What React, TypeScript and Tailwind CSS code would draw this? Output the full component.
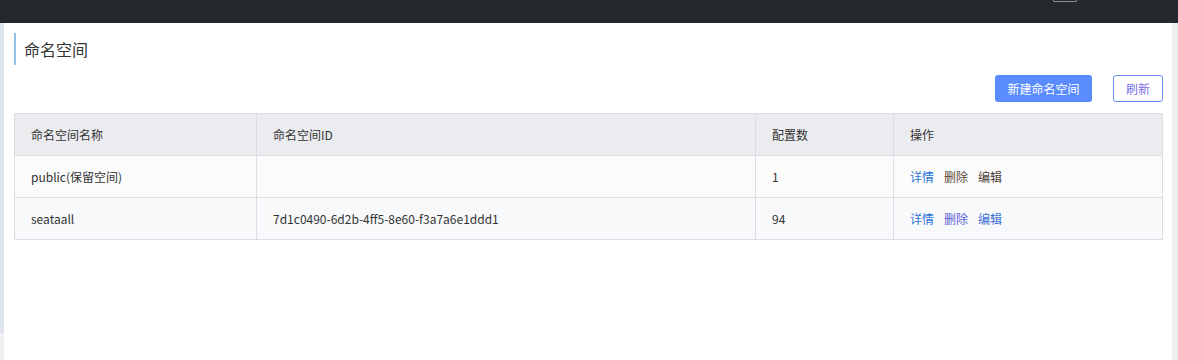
import React from "react";

interface Namespace {
  name: string;
  id: string;
  count: number;
  reserved?: boolean;
}

const rows: Namespace[] = [
  { name: "public(保留空间)", id: "", count: 1, reserved: true },
  { name: "seataall", id: "7d1c0490-6d2b-4ff5-8e60-f3a7a6e1ddd1", count: 94 },
];

export default function App() {
  return (
    <div
      className="w-[1178px] h-[360px] overflow-hidden bg-white text-[#333]"
      style={{ fontFamily: '"Noto Sans CJK SC", "Noto Sans", sans-serif' }}
    >
      {/* top nav */}
      <div className="h-[23px] bg-[#25292e] relative">
        <div className="absolute left-[1053px] top-[-2px] w-[24px] h-[4px] border border-[#8a8f96] rounded-[1px]" />
      </div>

      <div className="flex h-[337px]">
        {/* left strip */}
        <div className="w-[4px] flex flex-col">
          <div className="h-[310px] bg-[#dfe3ea]" />
          <div className="flex-1 bg-[#eef0f4]" />
        </div>

        {/* main */}
        <div className="w-[1168px] pl-[10px] pt-[10px]">
          <div className="border-l-2 border-[#8ec0e8] h-[32px] flex items-center pl-[8px]">
            <h1 className="text-[16px] leading-none text-[#333]">命名空间</h1>
          </div>

          <div className="flex justify-end gap-[21px] mt-[10px] pr-[9px]">
            <button className="h-[27px] w-[97px] rounded-[3px] bg-[#5a8cff] text-white text-[12px]">
              新建命名空间
            </button>
            <button className="h-[27px] w-[50px] rounded-[3px] border border-[#6a8ff5] bg-white text-[#7a6ee8] text-[12px]">
              刷新
            </button>
          </div>

          <table className="mt-[11px] w-[1148px] border-collapse table-fixed text-[12px]">
            <colgroup>
              <col className="w-[242px]" />
              <col className="w-[499px]" />
              <col className="w-[138px]" />
              <col className="w-[269px]" />
            </colgroup>
            <thead>
              <tr className="h-[42px] bg-[#ebecf0]">
                {["命名空间名称", "命名空间ID", "配置数", "操作"].map((h) => (
                  <th
                    key={h}
                    className="border border-[#dcdee3] text-left font-normal pl-[16px] text-[#333]"
                  >
                    {h}
                  </th>
                ))}
              </tr>
            </thead>
            <tbody>
              {rows.map((r, i) => (
                <tr
                  key={r.name}
                  className={`h-[42px] ${i === 0 ? "bg-[#fbfbfb]" : "bg-[#f8f9fb]"}`}
                >
                  <td className="border border-[#dcdee3] pl-[16px]">{r.name}</td>
                  <td className="border border-[#dcdee3] pl-[16px]">{r.id}</td>
                  <td className="border border-[#dcdee3] pl-[16px]">{r.count}</td>
                  <td className="border border-[#dcdee3] pl-[16px]">
                    <span className="text-[#2a74d6] cursor-pointer">详情</span>
                    <span
                      className={`ml-[10px] cursor-pointer ${
                        r.reserved ? "text-[#5a4a3a]" : "text-[#5a5fd6]"
                      }`}
                    >
                      删除
                    </span>
                    <span
                      className={`ml-[10px] cursor-pointer ${
                        r.reserved ? "text-[#4a3f3a]" : "text-[#3a6fd6]"
                      }`}
                    >
                      编辑
                    </span>
                  </td>
                </tr>
              ))}
            </tbody>
          </table>
        </div>

        {/* right strip */}
        <div className="w-[6px] bg-[#efefef]" />
      </div>
    </div>
  );
}
